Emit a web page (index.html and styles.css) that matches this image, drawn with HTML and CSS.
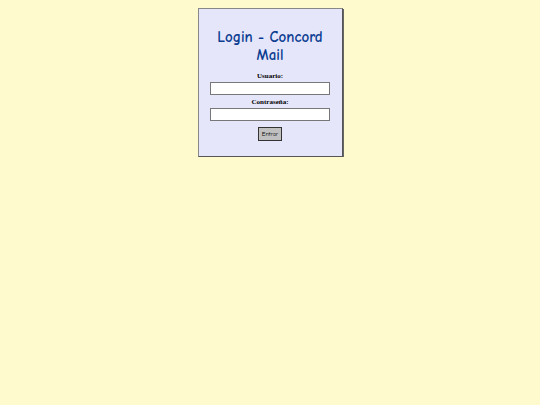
FILE: index.html
```html
<!DOCTYPE html>
<html>
<head>
<meta charset="utf-8">
<link rel="stylesheet" href="styles.css">
</head>
<body>
<div class="box">
  <h2 class="title">Login - Concord Mail</h2>
  <form class="form">
    <label class="label">Usuario:</label>
    <input class="field" type="text">
    <label class="label">Contraseña:</label>
    <input class="field" type="password">
    <button class="btn" type="button">Entrar</button>
  </form>
</div>
</body>
</html>
```
FILE: styles.css
```css
html, body { margin: 0; padding: 0; }
body {
  background: #fffacd;
  padding-top: 8px;
}
.box {
  width: 121px;
  margin: 0 auto;
  background: #e6e6fa;
  border: 1px solid #555;
  border-top-color: #888;
  border-left-color: #888;
  box-shadow: 1px 1px 0 #666;
  padding: 19px 11px 15px;
  text-align: center;
}
.title {
  margin: 0;
  font-family: "Comic Sans MS", "Comic Neue", cursive;
  font-size: 15px;
  line-height: 18px;
  font-weight: bold;
  color: #0b3d91;
}
.form {
  display: flex;
  flex-direction: column;
  align-items: center;
  margin-top: 8px;
}
.label {
  font-family: "Liberation Serif", serif;
  font-weight: bold;
  font-size: 7px;
  line-height: 9px;
  color: #000;
  margin-bottom: 1px;
}
.field {
  box-sizing: border-box;
  width: 120px;
  height: 13px;
  margin: 0 0 3px;
  padding: 0;
  border: 1px solid #777;
  background: #fff;
}
.btn {
  box-sizing: border-box;
  margin-top: 3px;
  width: 24px;
  height: 14px;
  padding: 0;
  font-family: "Comic Sans MS", "Comic Neue", cursive;
  font-size: 6px;
  background: #c0c0c0;
  border: 1px solid #333;
  color: #000;
}
```
